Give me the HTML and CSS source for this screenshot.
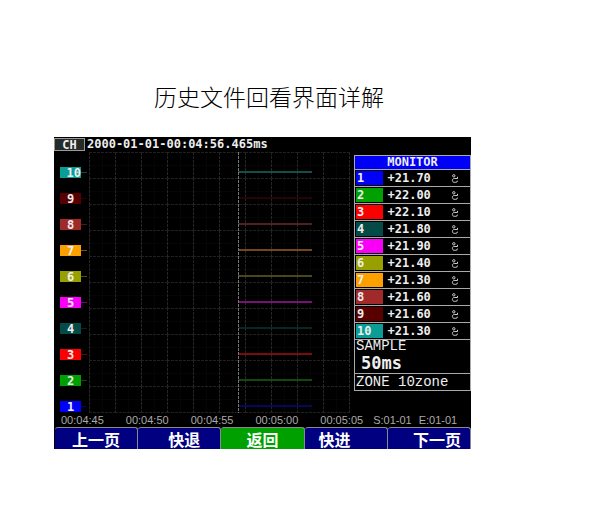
FILE: index.html
```
<!DOCTYPE html>
<html lang="zh-CN">
<head>
<meta charset="utf-8">
<title>历史文件回看界面详解</title>
<link rel="stylesheet" href="styles.css">
</head>
<body>
<h1 class="title">历史文件回看界面详解</h1>
<main class="device">
  <header class="topbar"><span class="ch">CH</span><time class="stamp">2000-01-01-00:04:56.465ms</time></header>
  <div class="body">
    <ol class="channels">
      <li class="tag c10">10</li>
      <li class="tag c9">9</li>
      <li class="tag c8">8</li>
      <li class="tag c7">7</li>
      <li class="tag c6">6</li>
      <li class="tag c5">5</li>
      <li class="tag c4">4</li>
      <li class="tag c3">3</li>
      <li class="tag c2">2</li>
      <li class="tag c1">1</li>
    </ol>
    <svg class="plot" viewBox="0 0 261 261" preserveAspectRatio="none" aria-hidden="true">
      <defs>
        <pattern id="grid" width="26" height="26" patternUnits="userSpaceOnUse">
          <path d="M13.5 0V26M0 13.5H26" stroke="#060606"/>
          <path d="M.5 0V26" stroke="#262626" stroke-dasharray="3 1"/>
          <path d="M0 .5H26" stroke="#202020" stroke-dasharray="3 1"/>
        </pattern>
      </defs>
      <rect width="261" height="261" fill="url(#grid)"/>
      <g stroke-width="1.5">
        <path d="M149 20H223" stroke="#1b6861"/>
        <path d="M149 46H223" stroke="#300606"/>
        <path d="M149 72H223" stroke="#692b29"/>
        <path d="M149 98H223" stroke="#986024"/>
        <path d="M149 124H223" stroke="#606221"/>
        <path d="M149 150H223" stroke="#a016a0"/>
        <path d="M149 176H223" stroke="#0a3431"/>
        <path d="M149 202H223" stroke="#a41010"/>
        <path d="M149 228H223" stroke="#126414"/>
        <path d="M149 254H223" stroke="#080878"/>
      </g>
      <path d="M149.5 0V261" stroke="#777" stroke-dasharray="3 1"/>
    </svg>
    <table class="monitor">
      <colgroup><col class="col-num"><col class="col-value"><col></colgroup>
      <thead><tr><th colspan="3" class="head">MONITOR</th></tr></thead>
      <tbody>
        <tr><th><span class="num c1">1</span></th><td>+21.70</td><td><svg class="deg" role="img" aria-label="℃"><use href="#unit"/></svg></td></tr>
        <tr><th><span class="num c2">2</span></th><td>+22.00</td><td><svg class="deg" role="img" aria-label="℃"><use href="#unit"/></svg></td></tr>
        <tr><th><span class="num c3">3</span></th><td>+22.10</td><td><svg class="deg" role="img" aria-label="℃"><use href="#unit"/></svg></td></tr>
        <tr><th><span class="num c4">4</span></th><td>+21.80</td><td><svg class="deg" role="img" aria-label="℃"><use href="#unit"/></svg></td></tr>
        <tr><th><span class="num c5">5</span></th><td>+21.90</td><td><svg class="deg" role="img" aria-label="℃"><use href="#unit"/></svg></td></tr>
        <tr><th><span class="num c6">6</span></th><td>+21.40</td><td><svg class="deg" role="img" aria-label="℃"><use href="#unit"/></svg></td></tr>
        <tr><th><span class="num c7">7</span></th><td>+21.30</td><td><svg class="deg" role="img" aria-label="℃"><use href="#unit"/></svg></td></tr>
        <tr><th><span class="num c8">8</span></th><td>+21.60</td><td><svg class="deg" role="img" aria-label="℃"><use href="#unit"/></svg></td></tr>
        <tr><th><span class="num c9">9</span></th><td>+21.60</td><td><svg class="deg" role="img" aria-label="℃"><use href="#unit"/></svg></td></tr>
        <tr><th><span class="num c10">10</span></th><td>+21.30</td><td><svg class="deg" role="img" aria-label="℃"><use href="#unit"/></svg></td></tr>
      </tbody>
      <tfoot>
        <tr><td colspan="3" class="sample"><div class="label">SAMPLE</div><strong class="rate">50ms</strong></td></tr>
        <tr><td colspan="3" class="zone"><div class="label">ZONE 10zone</div></td></tr>
      </tfoot>
    </table>
  </div>
  <div class="axis">
    <span>00:04:45</span><span>00:04:50</span><span>00:04:55</span><span>00:05:00</span><span>00:05:05</span>
    <span class="range"><span>S:01-01</span><span>E:01-01</span></span>
  </div>
  <nav class="keys">
    <button type="button" class="key">上一页</button>
    <button type="button" class="key inset-start">快退</button>
    <button type="button" class="key active">返回</button>
    <button type="button" class="key start">快进</button>
    <button type="button" class="key end">下一页</button>
  </nav>
</main>
<svg width="0" height="0" class="defs" aria-hidden="true">
  <symbol id="unit" viewBox="0 0 8 9">
    <circle cx="2.8" cy="1.8" r="1.2"/>
    <path d="M6.5 2.8V4.5H3.2C.8 4.5 .8 8.3 3.2 8.3H4.8Q6.5 8.3 6.5 6.6"/>
  </symbol>
</svg>
</body>
</html>
```
FILE: styles.css
```
* { box-sizing: border-box; }
body {
  margin: 0;
  padding: 79px 124px 0 54px;
  background: #fff;
  font-family: "DejaVu Sans Mono", "Noto Sans CJK SC", monospace;
}
.title {
  margin: 0 0 24px;
  padding-left: 13px;
  color: #000;
  font: 300 23px/34px "Noto Sans CJK SC", sans-serif;
  text-align: center;
}
.device {
  background: #000;
  color: #eee;
  font-size: 12px;
}
.topbar {
  display: flex;
  gap: 2px;
  height: 15px;
  font-size: 12px;
  font-weight: bold;
  line-height: 15px;
}
.ch {
  width: 31px;
  height: 13px;
  margin-top: 1px;
  border: 1px solid #999;
  background: #252b27;
  line-height: 12px;
  text-align: center;
}
.body { display: flex; }
.channels {
  display: flex;
  flex-direction: column;
  gap: 15px;
  width: 35px;
  margin: 0;
  padding: 15px 0 0 6px;
  list-style: none;
}
.tag {
  position: relative;
  width: 21px;
  height: 11px;
  background: var(--c);
  font-weight: bold;
  font-size: 12px;
  line-height: 12px;
  text-align: center;
}
.tag::after {
  content: "";
  position: absolute;
  left: 100%;
  top: 5px;
  width: 6px;
  height: 1px;
  background: var(--c);
  opacity: .5;
}
.tag.c10 { text-align: right; }
.c1 { --c: #0000f8; }
.c2 { --c: #00a000; }
.c3 { --c: #fa0000; }
.c4 { --c: #044b48; }
.c5 { --c: #f800f8; }
.c6 { --c: #98a000; }
.c7 { --c: #fca000; }
.c8 { --c: #a02a2a; }
.c9 { --c: #580000; }
.c10 { --c: #0a9d95; }
.plot {
  flex: 1;
  min-width: 0;
  height: 261px;
}
.monitor {
  width: 117px;
  margin: 3px 0 auto 4px;
  border-collapse: collapse;
  table-layout: fixed;
}
.col-num { width: 33px; }
.col-value { width: 52px; }
.monitor th, .monitor td { padding: 0; }
.monitor tr {
  height: 17px;
  border: 1px solid #aaa;
}
.monitor thead tr { height: 14px; }
.monitor th, .monitor tbody td {
  font-size: 12px;
  font-weight: bold;
  line-height: 13px;
}
.monitor .head { background: #0000f8; }
.num {
  display: block;
  width: 27px;
  height: 14px;
  margin-left: 1px;
  padding-left: 1px;
  background: var(--c);
  line-height: 15px;
  text-align: left;
}
.deg {
  display: block;
  width: 8px;
  height: 9px;
  margin-left: 11px;
  fill: none;
  stroke: #ccc;
  stroke-width: 1;
}
.label {
  padding-left: 1px;
  font: 14px/13px "Liberation Mono", monospace;
}
.monitor .sample { height: 33px; }
.rate {
  display: block;
  padding-left: 6px;
  font-size: 17px;
  line-height: 20px;
}
.axis {
  display: flex;
  gap: 22px;
  height: 14px;
  padding-left: 7px;
  color: #aaa;
  font: 11px/14px "Liberation Sans", sans-serif;
  white-space: nowrap;
}
.range {
  display: flex;
  gap: 7px;
  margin-left: -12px;
}
.keys {
  display: grid;
  grid-template-columns: repeat(5, 1fr);
  padding-left: 1px;
}
.key {
  height: 22px;
  padding: 0;
  border: solid #8a8a8a;
  border-width: 1px 1px 0 0;
  border-radius: 3px 3px 0 0;
  background: #000080;
  color: #fff;
  font: bold 16px/18px "Noto Sans CJK SC", sans-serif;
}
.active { background: #00a000; }
.inset-start { padding-left: 10px; }
.start { padding-left: 14px; text-align: left; }
.end { padding-right: 9px; text-align: right; }
.defs { display: block; }
```
